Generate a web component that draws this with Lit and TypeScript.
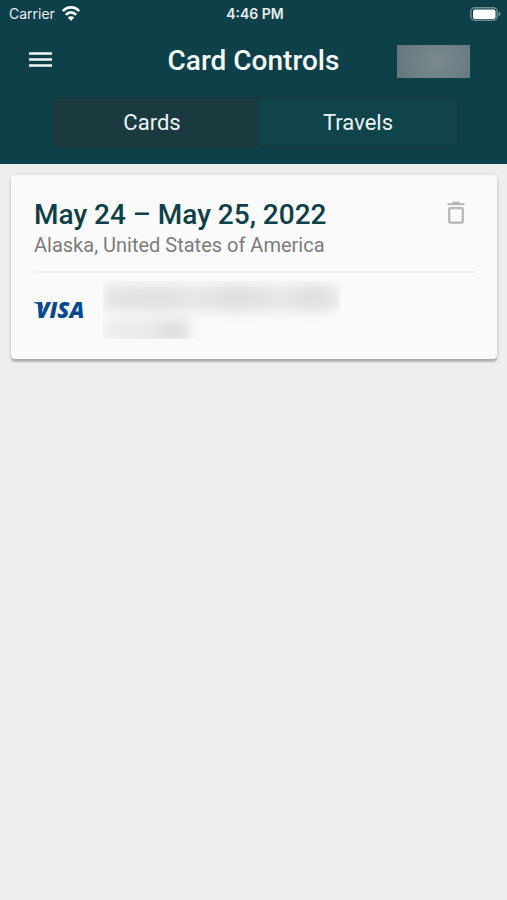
import { LitElement, html, css } from "lit";
import { customElement, state } from "lit/decorators.js";

@customElement("status-bar")
class StatusBar extends LitElement {
  static styles = css`
    :host {
      display: grid;
      grid-template-columns: 1fr auto 1fr;
      align-items: center;
      height: 28px;
      padding: 0 6px 0 9px;
      color: #e6edef;
      font-family: Inter, sans-serif;
      font-size: 14px;
      line-height: 20px;
    }
    .carrier {
      display: flex;
      align-items: center;
      gap: 7px;
    }
    .time {
      font-weight: 600;
    }
    .battery {
      justify-self: end;
    }
    svg {
      display: block;
    }
  `;

  render() {
    return html`
      <div class="carrier">
        <span>Carrier</span>
        <svg width="18" height="16" viewBox="0 0 18 16" aria-label="Wi-Fi" fill="none" stroke="#fff" stroke-width="2.7">
          <path d="M0.9 5.2C5.4 0.2 12.6 0.2 17.1 5.2" />
          <path d="M3.9 8.8C6.8 5.6 11.2 5.6 14.1 8.8" />
          <path d="M9 15L5.8 11.5Q9 8.8 12.2 11.5Z" fill="#fff" stroke="none" />
        </svg>
      </div>
      <div class="time">4:46 PM</div>
      <svg class="battery" width="31" height="14" viewBox="0 0 31 14" aria-label="Battery full">
        <rect x="0.8" y="0.8" width="26.4" height="12.4" rx="4" fill="none" stroke="#6d8f95" stroke-width="1.5" />
        <rect x="3" y="2.5" width="22.5" height="9.5" rx="2" fill="#fff" />
        <path d="M28.6 4.6Q30.6 5.4 30.6 7T28.6 9.4Z" fill="#6d8f95" />
      </svg>
    `;
  }
}

@customElement("travel-card")
class TravelCard extends LitElement {
  static styles = css`
    :host {
      display: block;
      padding: 24px 22px 20px 23px;
      border-radius: 4px;
      background: #fafafa;
      box-shadow: 0 3px 2px rgba(0, 0, 0, 0.24), 0 0 4px rgba(0, 0, 0, 0.1);
    }
    .top {
      display: flex;
      justify-content: space-between;
      align-items: flex-start;
      padding-bottom: 12px;
      border-bottom: 2px solid #efefef;
    }
    h2 {
      margin: 0;
      color: #0d4049;
      font-size: 28px;
      line-height: 32px;
      font-weight: 500;
    }
    p {
      margin: 0;
      color: #7c7c7c;
      font-size: 20px;
      line-height: 28px;
    }
    button {
      margin: 0;
      padding: 2px 8px;
      border: 0;
      background: none;
      cursor: pointer;
    }
    svg {
      display: block;
    }
    .account {
      display: flex;
      align-items: center;
      gap: 18px;
      padding-top: 8px;
    }
    .visa text {
      font: italic 800 22px "Open Sans", sans-serif;
      fill: #08488f;
    }
    .masked {
      overflow: hidden;
      width: 237px;
      height: 58px;
    }
    .blot {
      height: 26px;
      margin-top: 4px;
      border-radius: 8px;
      background: linear-gradient(90deg, #e5e5e5, #e0e0e0 25%, #e7e7e7 38%, #dedede 58%, #e8e8e8 75%, #dedede 90%, #eaeaea);
      filter: blur(6px);
    }
    .blot.short {
      width: 88px;
      height: 24px;
      margin-top: 8px;
      background: linear-gradient(90deg, #ededed, #eaeaea 50%, #dcdcdc 82%, #e8e8e8);
    }
  `;

  render() {
    return html`
      <div class="top">
        <div>
          <h2>May 24 – May 25, 2022</h2>
          <p>Alaska, United States of America</p>
        </div>
        <button aria-label="Delete travel notice">
          <svg width="22" height="24" viewBox="0 0 22 24" fill="none" stroke="#b5b5b5">
            <path d="M2.5 3.2H19.5" stroke-width="2" />
            <path d="M7.5 1.7H14.5" stroke-width="2" />
            <rect x="4.2" y="7.1" width="13.6" height="14.6" rx="1" stroke-width="2.2" />
          </svg>
        </button>
      </div>
      <div class="account">
        <svg class="visa" width="51" height="34" viewBox="0 0 51 34" aria-label="Visa">
          <text x="2" y="25">VISA</text>
          <path d="M0 9.3H8L9.5 17Q6 10.6 0 9.9Z" fill="#08488f" />
        </svg>
        <div class="masked" aria-hidden="true">
          <div class="blot"></div>
          <div class="blot short"></div>
        </div>
      </div>
    `;
  }
}

@customElement("app-root")
class AppRoot extends LitElement {
  @state() tab = "Cards";

  static styles = css`
    :host {
      display: block;
      min-height: 100vh;
      background: #eeeeee;
      font-family: Roboto, sans-serif;
    }
    header {
      padding-bottom: 16px;
      background: #0d4049;
    }
    .bar {
      display: grid;
      grid-template-columns: 1fr auto 1fr;
      align-items: center;
      height: 66px;
      padding: 0 28px;
    }
    .menu {
      justify-self: start;
      margin: 0;
      padding: 0;
      border: 0;
      background: none;
      cursor: pointer;
    }
    .menu svg {
      display: block;
    }
    h1 {
      margin: 0;
      color: #f4f8f9;
      font-size: 28px;
      line-height: 32px;
      font-weight: 500;
    }
    .logo {
      justify-self: end;
      width: 73px;
      height: 33px;
      margin-right: 9px;
      background: radial-gradient(circle at 55% 50%, #7a8a8e, #6d7f84 60%, #62777c);
    }
    .tabs {
      display: grid;
      grid-template-columns: 51fr 49fr;
      margin: 3px 48px 0 51px;
      border: 2px solid #163a40;
      border-radius: 6px;
      background: #1b3a40;
      overflow: hidden;
    }
    .tab {
      height: 47px;
      padding: 0;
      border: 0;
      border-radius: 4px;
      background: #0e444a;
      color: #eaf4f6;
      font-family: inherit;
      font-size: 22px;
      cursor: pointer;
    }
    .tab:first-child {
      padding-right: 8px;
    }
    .tab[aria-selected="true"] {
      background: #1b3a40;
    }
    main {
      padding: 11px 10px 11px 11px;
    }
  `;

  render() {
    return html`
      <header>
        <status-bar></status-bar>
        <div class="bar">
          <button class="menu" aria-label="Menu">
            <svg width="24" height="20" viewBox="0 0 24 20" fill="none" stroke="#f4f8f9" stroke-width="2.6">
              <path d="M1 2.5H24M1 8.5H24M1 14.5H24" />
            </svg>
          </button>
          <h1>Card Controls</h1>
          <div class="logo"></div>
        </div>
        <div class="tabs" role="tablist">
          ${["Cards", "Travels"].map(
            (name) => html`
              <button
                class="tab"
                role="tab"
                aria-selected=${this.tab === name ? "true" : "false"}
                @click=${() => (this.tab = name)}
              >${name}</button>
            `
          )}
        </div>
      </header>
      <main>
        <travel-card></travel-card>
      </main>
    `;
  }
}
